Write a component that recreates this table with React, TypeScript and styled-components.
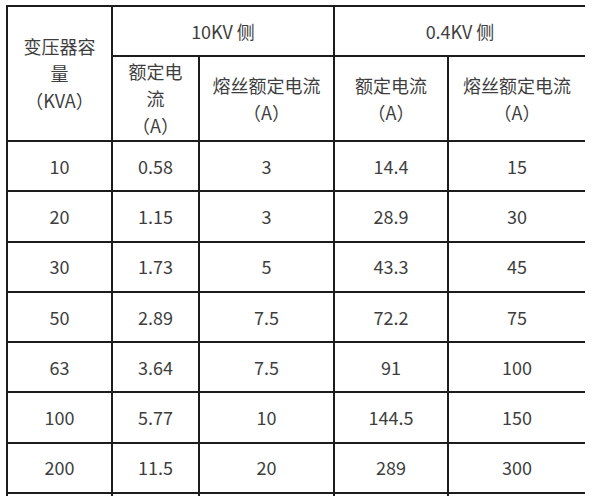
import * as React from "react";
import styled, { createGlobalStyle } from "styled-components";

const GlobalStyle = createGlobalStyle`
  html, body {
    margin: 0;
    padding: 0;
    background: #ffffff;
    overflow: hidden;
  }
  body {
    font-family: "Noto Sans CJK SC", "Noto Sans", sans-serif;
  }
`;

const rows: string[][] = [
  ["10", "0.58", "3", "14.4", "15"],
  ["20", "1.15", "3", "28.9", "30"],
  ["30", "1.73", "5", "43.3", "45"],
  ["50", "2.89", "7.5", "72.2", "75"],
  ["63", "3.64", "7.5", "91", "100"],
  ["100", "5.77", "10", "144.5", "150"],
  ["200", "11.5", "20", "289", "300"],
  ["", "", "", "", ""],
];

const widths = [105, 87, 135, 114, 137];

export default function App() {
  return (
    <Page>
      <GlobalStyle />
      <Table>
        <colgroup>
          {widths.map((w, i) => (
            <col key={i} style={{ width: w }} />
          ))}
        </colgroup>
        <thead>
          <HeadRow $height={50}>
            <Cell rowSpan={2}>
              变压器容
              <br />
              量
              <br />
              （KVA）
            </Cell>
            <Cell colSpan={2}>10KV 侧</Cell>
            <Cell colSpan={2} $last>
              0.4KV 侧
            </Cell>
          </HeadRow>
          <HeadRow $height={85}>
            <Cell>
              额定电
              <br />
              流
              <br />
              （A）
            </Cell>
            <Cell>
              熔丝额定电流
              <br />
              （A）
            </Cell>
            <Cell>
              额定电流
              <br />
              （A）
            </Cell>
            <Cell $last>
              熔丝额定电流
              <br />
              （A）
            </Cell>
          </HeadRow>
        </thead>
        <tbody>
          {rows.map((row, r) => (
            <DataRow key={r}>
              {row.map((v, c) => (
                <Cell key={c} $last={c === row.length - 1}>
                  {v}
                </Cell>
              ))}
            </DataRow>
          ))}
        </tbody>
      </Table>
    </Page>
  );
}

const Page = styled.div`
  width: 599px;
  height: 496px;
  padding: 5px 0 0 6px;
  box-sizing: border-box;
  overflow: hidden;
`;

const Table = styled.table`
  border-collapse: collapse;
  table-layout: fixed;
  width: 578px;
  color: #3e3e3e;
  font-size: 18px;
  line-height: 27px;
`;

const HeadRow = styled.tr<{ $height: number }>`
  height: ${(p) => p.$height}px;
`;

const DataRow = styled.tr`
  height: 50.3px;
`;

const Cell = styled.td<{ $last?: boolean }>`
  border: 2px solid #1c1c1c;
  border-right: ${(p) => (p.$last ? "none" : "2px solid #1c1c1c")};
  padding: 0;
  text-align: center;
  vertical-align: middle;
  white-space: nowrap;
`;
